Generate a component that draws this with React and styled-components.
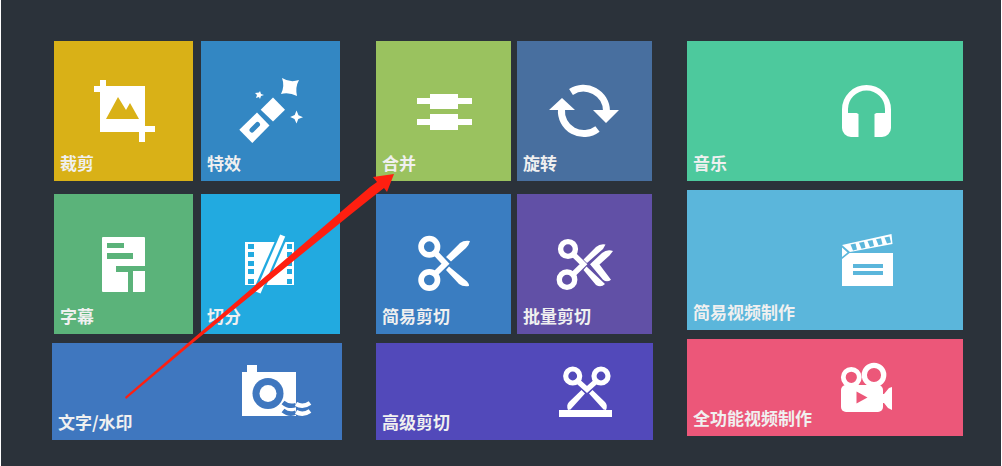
import styled, { createGlobalStyle } from 'styled-components'
import React from 'react'

// In every icon white is the drawing and currentColor is the tile behind it
const icons = {
    crop: (
        <>
            <path d="M13 5h6v6h39v40h10v6H58v10h-6V57H13V17H7v-6h6z" />
            <path fill="currentColor" d="M19 44 31 22l8 13 4-7 9 16z" />
        </>
    ),
    effects: (
        <>
            <path d="M48 3q8 5 17 2-4 7-2 16-8-4-16-2 4-8 1-16z" />
            <path d="M26 16l1 3 3 1-3 1-1 3-1-2-3 1 1-3-2-2 4-.5z" />
            <path d="M62.500 35.500l2 4.700 4.500 2-4.700 1.800-1.800 4.500-2-4.500-4.300-2 4.500-2z" />
            <path d="M39 22.500 51 34.700 39 46.500 26.700 34.700z" />
            <path d="M23 37.500 35.500 50.500 18.300 68 5.300 54.700z" />
            <path stroke="currentColor" strokeWidth="5" strokeLinecap="round" d="M23.500 49.500 18 55" />
        </>
    ),
    merge: <path d="M10 23h13v-4h28v4h14v6H51v5H23v-5H10zM10 44h13v-5h28v5h14v6H51v5H23v-5H10z" />,
    rotate: (
        <>
            <path fill="none" stroke="#fff" strokeWidth="7" d="M23 17A23 23 0 0 1 58.500 36M13.500 34A22.500 22.500 0 0 0 49.500 54" />
            <path d="M45 35h26L58 48zM1 35h26L14 23z" />
        </>
    ),
    music: (
        <path d="M13 34.500a24.500 24.500 0 0 1 49 0V53a9 9 0 0 1-9 9h-7.500V39l2-1H56v-4a18.500 18.500 0 0 0-37 0v4h8.500l2 1v23H22a9 9 0 0 1-9-9z" />
    ),
    subtitle: (
        <>
            <rect x="15" y="9" width="43" height="55" rx="1" />
            <path fill="currentColor" d="M20 15h17v5H20zM20 25h26v6H20zM29 38h29v5H46v21h-5V44H29z" />
        </>
    ),
    split: (
        <>
            <path d="M11 14h49v43H11z" />
            {[16, 24, 33, 41, 51].map((y) => (
                <path key={y} fill="currentColor" d={`M14 ${y}h6v5h-6zM53 ${y}h5v5h-5z`} />
            ))}
            <path stroke="currentColor" strokeWidth="10" d="M50 5 23 66" />
            <path stroke="#fff" strokeWidth="5.500" d="M48.700 7.500 24 64.500" />
        </>
    ),
    scissors: (
        <>
            <g fill="none" stroke="#fff" strokeWidth="5.700">
                <circle cx="22.300" cy="18.700" r="8.200" />
                <circle cx="22.300" cy="52" r="8.200" />
                <path d="M28 24.500 38.500 35.700 28 46" />
            </g>
            <path d="M39 29 53 15q4-3 10-2-1 4-4 7L44 33.500zM39 42l3-3.500 18 15q2 2 2 4.500-6 1-10-2z" />
        </>
    ),
    batch: (
        <>
            <g fill="none" stroke="#fff" strokeWidth="5.400">
                <circle cx="20" cy="21" r="7.400" />
                <circle cx="19" cy="51.700" r="7.700" />
                <path d="M25 26 35.500 36.300 25 46.500" />
            </g>
            <path d="M35.500 31.500 48 19q4-3.500 9.500-2.500L55 21 39 35zM35.500 42l3-3.500L57 56q-4 4-9 1z" />
            <path d="M42 36.300 54 25q5-4 11-2l-3.500 4.500-10 9L63 51.700q-4 3-8 0z" />
        </>
    ),
    clapper: (
        <>
            <path d="M13 21 62.500 10l1 10L21 28zM13 23.500l5.500 5L13 33zM13 35l7.500-6H64v33H13z" />
            {[0, 1, 2, 3, 4].map((i) => (
                <path key={i} fill="currentColor" transform={`translate(${i * 8.5} ${i * -1.75})`} d="M21.500 20.500l5-1 1.500 6-4 1z" />
            ))}
            <path fill="currentColor" d="M24 40h30v4H24zM24 47h30v4H24z" />
        </>
    ),
    watermark: (
        <>
            <path d="M8 9h10v7h39v44H3V16h5z" />
            <circle cx="29" cy="37.500" r="15.500" fill="currentColor" />
            <circle cx="29" cy="37.500" r="8.500" />
            <g fill="none" strokeWidth="4.500">
                <path stroke="currentColor" d="M44 46.500q6 5 13 2.500M44 54.500q6 5 13 2" />
                <path stroke="#fff" d="M57 48q7 4 14-1M57 56q7 4 14-1" />
            </g>
        </>
    ),
    advanced: (
        <>
            <g fill="none" stroke="#fff" strokeWidth="5.200">
                <circle cx="22.700" cy="20" r="7" />
                <circle cx="51" cy="20" r="7" />
                <path d="M27.500 25 37 33.500 46.500 25" />
            </g>
            <path d="M31.500 34l3.500 3.500L20.500 53.500 18 54q-2-5 1-8zM42.500 34 39 37.500l14.500 16 2.500.5q2-5-1-8z" />
            <path d="M9 54h53v7H9z" />
        </>
    ),
    camera: (
        <>
            <rect x="12" y="33" width="42" height="27" rx="5" />
            <circle cx="22.300" cy="25.300" r="8" fill="none" stroke="#fff" strokeWidth="4.800" />
            <circle cx="45" cy="23" r="9.700" fill="none" stroke="#fff" strokeWidth="5.300" />
            <path d="M53 42h2l5-6 3-1v23l-4-2-4-5h-2z" />
            <path fill="currentColor" d="M27.500 39.500l11 6-11 6z" />
        </>
    )
}

const basicTools = [
    { icon: 'crop', label: '裁剪', color: '#d9b117' },
    { icon: 'effects', label: '特效', color: '#3387c3' },
    { icon: 'subtitle', label: '字幕', color: '#5bb37a' },
    { icon: 'split', label: '切分', color: '#22aae0' }
]

const cutTools = [
    { icon: 'merge', label: '合并', color: '#9ac25f' },
    { icon: 'rotate', label: '旋转', color: '#486f9f' },
    { icon: 'scissors', label: '简易剪切', color: '#3a7dc1' },
    { icon: 'batch', label: '批量剪切', color: '#6150a6' }
]

const ToolTile = ({ icon, label, color, wide, short, inset }) => (
    <Tile type="button" $color={color} $short={short}>
        <Icon viewBox="0 0 73 72" aria-hidden="true" $wide={wide} $inset={inset}>{icons[icon]}</Icon>
        <Label>{label}</Label>
    </Tile>
)

const App = () => (
    <Page>
        <GlobalStyle />
        <Group>
            <Pairs $gap="8px" $padding="0 2px">
                {basicTools.map((tool) => <ToolTile key={tool.icon} {...tool} />)}
            </Pairs>
            <ToolTile icon="watermark" label="文字/水印" color="#3f77bf" wide short inset="30px" />
        </Group>
        <Group>
            <Pairs $gap="6px" $padding="0 1px 0 0">
                {cutTools.map((tool) => <ToolTile key={tool.icon} {...tool} />)}
            </Pairs>
            <ToolTile icon="advanced" label="高级剪切" color="#5249ba" wide short inset="30px" />
        </Group>
        <Group>
            <ToolTile icon="music" label="音乐" color="#4dc99d" wide inset="61px" />
            <ToolTile icon="clapper" label="简易视频制作" color="#5bb6db" wide inset="61px" />
            <ToolTile icon="camera" label="全功能视频制作" color="#ec5779" wide short inset="61px" />
        </Group>
        <Arrow viewBox="0 0 270 226" aria-hidden="true">
            <path d="M0 223 225 30 245 13l7-5-4-5 21-3-7 18-3-4-14 11-20 16L70 167 1 225z" />
        </Arrow>
    </Page>
)

const GlobalStyle = createGlobalStyle`
body {
    margin: 0;
    background: #2b323a;
}
`
const Page = styled.main`
position: relative;
box-sizing: border-box;
min-height: 100vh;
display: grid;
grid-template-columns: 290fr 277fr 276fr;
column-gap: 34px;
align-items: start;
padding: 41px 38px 26px 51px;
border: solid #fff;
border-width: 0 1px;
background: #2b323a;
font-family: "Noto Sans CJK SC", sans-serif;
`
const Group = styled.section`
display: flex;
flex-direction: column;
gap: 9px;
`
const Pairs = styled.div`
display: grid;
grid-template-columns: 1fr 1fr;
gap: 13px ${(props) => props.$gap};
padding: ${(props) => props.$padding};
`
const Tile = styled.button`
display: grid;
height: ${(props) => (props.$short ? '97px' : '140px')};
padding: 0;
border: none;
color: ${(props) => props.$color};
background: ${(props) => props.$color};
font-family: inherit;
cursor: pointer;
`
const Icon = styled.svg`
grid-area: 1 / 1;
align-self: center;
justify-self: ${(props) => (props.$wide ? 'end' : 'center')};
width: 73px;
height: 72px;
margin-right: ${(props) => props.$inset || '0'};
fill: #fff;
`
const Label = styled.span`
grid-area: 1 / 1;
align-self: end;
justify-self: start;
padding: 0 6px 8px;
color: #f0f0f0;
font-size: 17px;
font-weight: bold;
line-height: 20px;
`
// Pointer drawn over the tiles, from the watermark tool up to merge
const Arrow = styled.svg`
position: absolute;
top: 174px;
left: 124px;
width: 270px;
height: 226px;
fill: #ff1f10;
pointer-events: none;
`
export default App
